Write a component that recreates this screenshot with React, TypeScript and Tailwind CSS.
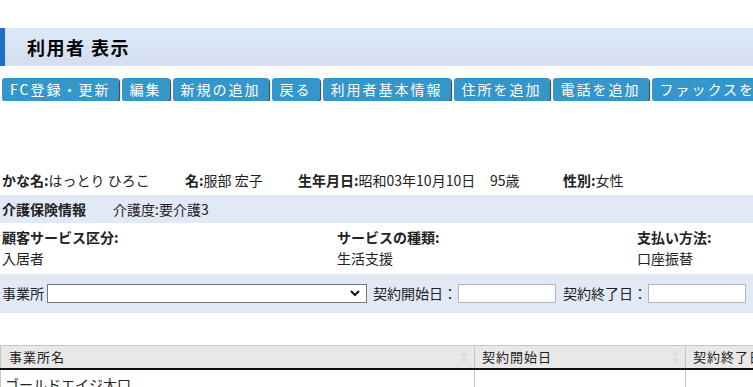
import React from "react";

const buttons = [
  "FC登録・更新",
  "編集",
  "新規の追加",
  "戻る",
  "利用者基本情報",
  "住所を追加",
  "電話を追加",
  "ファックスを追加",
];

function SortIcon() {
  return (
    <svg width="8" height="14" viewBox="0 0 8 14" className="shrink-0">
      <path d="M4 1 L7 5.5 H1 Z" fill="#d9d9d9" />
      <path d="M4 13 L7 8.5 H1 Z" fill="#d9d9d9" />
    </svg>
  );
}

export default function App() {
  return (
    <div
      className="w-[753px] h-[387px] overflow-hidden bg-white text-[14px] text-[#222]"
      style={{ fontFamily: '"Noto Sans CJK JP", "Noto Sans", sans-serif' }}
    >
      <div className="h-[28px]" />
      {/* page title */}
      <div className="h-[38px] flex items-center border-l-[5px] border-[#1f6ec6] bg-gradient-to-b from-[#dbeaf9] to-[#d5ddef] pl-[22px]">
        <h1 className="text-[18px] font-bold tracking-[1.5px] text-black">利用者 表示</h1>
      </div>

      {/* action buttons */}
      <div className="mt-[12px] flex gap-[3px] pl-[2px] whitespace-nowrap overflow-hidden">
        {buttons.map((b) => (
          <button
            key={b}
            className="h-[23px] shrink-0 rounded-[3px] bg-[#3596ca] pl-[8px] pr-[8px] text-[14px] leading-[23px] tracking-[2px] text-white shadow-[1px_1px_1px_#3a3a3a]"
          >
            {b}
          </button>
        ))}
      </div>

      {/* basic info */}
      <div className="mt-[67px] flex h-[24px] items-center pl-[2px]">
        <span className="w-[183px]">
          <b>かな名:</b>はっとり ひろこ
        </span>
        <span className="w-[113px]">
          <b>名:</b>服部 宏子
        </span>
        <span className="w-[192px]">
          <b>生年月日:</b>昭和03年10月10日
        </span>
        <span className="w-[73px]">95歳</span>
        <span>
          <b>性別:</b>女性
        </span>
      </div>

      <div className="mt-[3px] flex h-[28px] items-center bg-[#e2e9f6] pl-[2px]">
        <b className="w-[111px]">介護保険情報</b>
        <span>介護度:要介護3</span>
      </div>

      <div className="grid grid-cols-[335px_300px_1fr] pl-[2px] pt-[4px] pb-[5px] leading-[21px]">
        <div>
          <b className="block">顧客サービス区分:</b>
          <span>入居者</span>
        </div>
        <div>
          <b className="block">サービスの種類:</b>
          <span>生活支援</span>
        </div>
        <div>
          <b className="block">支払い方法:</b>
          <span>口座振替</span>
        </div>
      </div>

      {/* filter */}
      <div className="flex h-[39px] items-center bg-[#e2e9f6] pl-[2px] whitespace-nowrap">
        <span className="text-[14px]">事業所</span>
        <div className="relative ml-[3px] h-[19px] w-[320px] border border-[#767676] bg-white">
          <svg className="absolute right-[6px] top-[5px]" width="10" height="7" viewBox="0 0 10 7">
            <path d="M1 1 L5 5 L9 1" stroke="#111" strokeWidth="2" fill="none" />
          </svg>
        </div>
        <span className="ml-[6px] text-[14px]">契約開始日：</span>
        <div className="ml-[1px] h-[19px] w-[98px] border border-[#b5b5b5] bg-white" />
        <span className="ml-[7px] text-[14px]">契約終了日：</span>
        <div className="ml-[1px] h-[19px] w-[98px] border border-[#b5b5b5] bg-white" />
      </div>

      {/* table */}
      <table className="mt-[32px] w-[820px] border-collapse text-[13px]">
        <thead>
          <tr className="h-[23px] bg-[#e8e8e8] border-t border-[#c6c6c6] border-b-2 border-b-[#111]">
            <th className="w-[474px] border-l border-[#c6c6c6] pl-[8px] pr-[6px] text-left font-normal tracking-[1px]">
              <div className="flex items-center justify-between">
                <span>事業所名</span>
                <SortIcon />
              </div>
            </th>
            <th className="w-[211px] border-l border-[#c6c6c6] pl-[7px] pr-[6px] text-left font-normal tracking-[1px]">
              <div className="flex items-center justify-between">
                <span>契約開始日</span>
                <SortIcon />
              </div>
            </th>
            <th className="border-l border-[#c6c6c6] pl-[7px] text-left font-normal tracking-[1px]">
              契約終了日
            </th>
          </tr>
        </thead>
        <tbody>
          <tr className="h-[24px]">
            <td className="border-l border-[#c6c6c6] pl-[4px] pt-[4px] align-top text-[14px] leading-[20px]">
              ゴールドエイジ太口
            </td>
            <td className="border-l border-[#c6c6c6]" />
            <td className="border-l border-[#c6c6c6]" />
          </tr>
        </tbody>
      </table>
    </div>
  );
}
